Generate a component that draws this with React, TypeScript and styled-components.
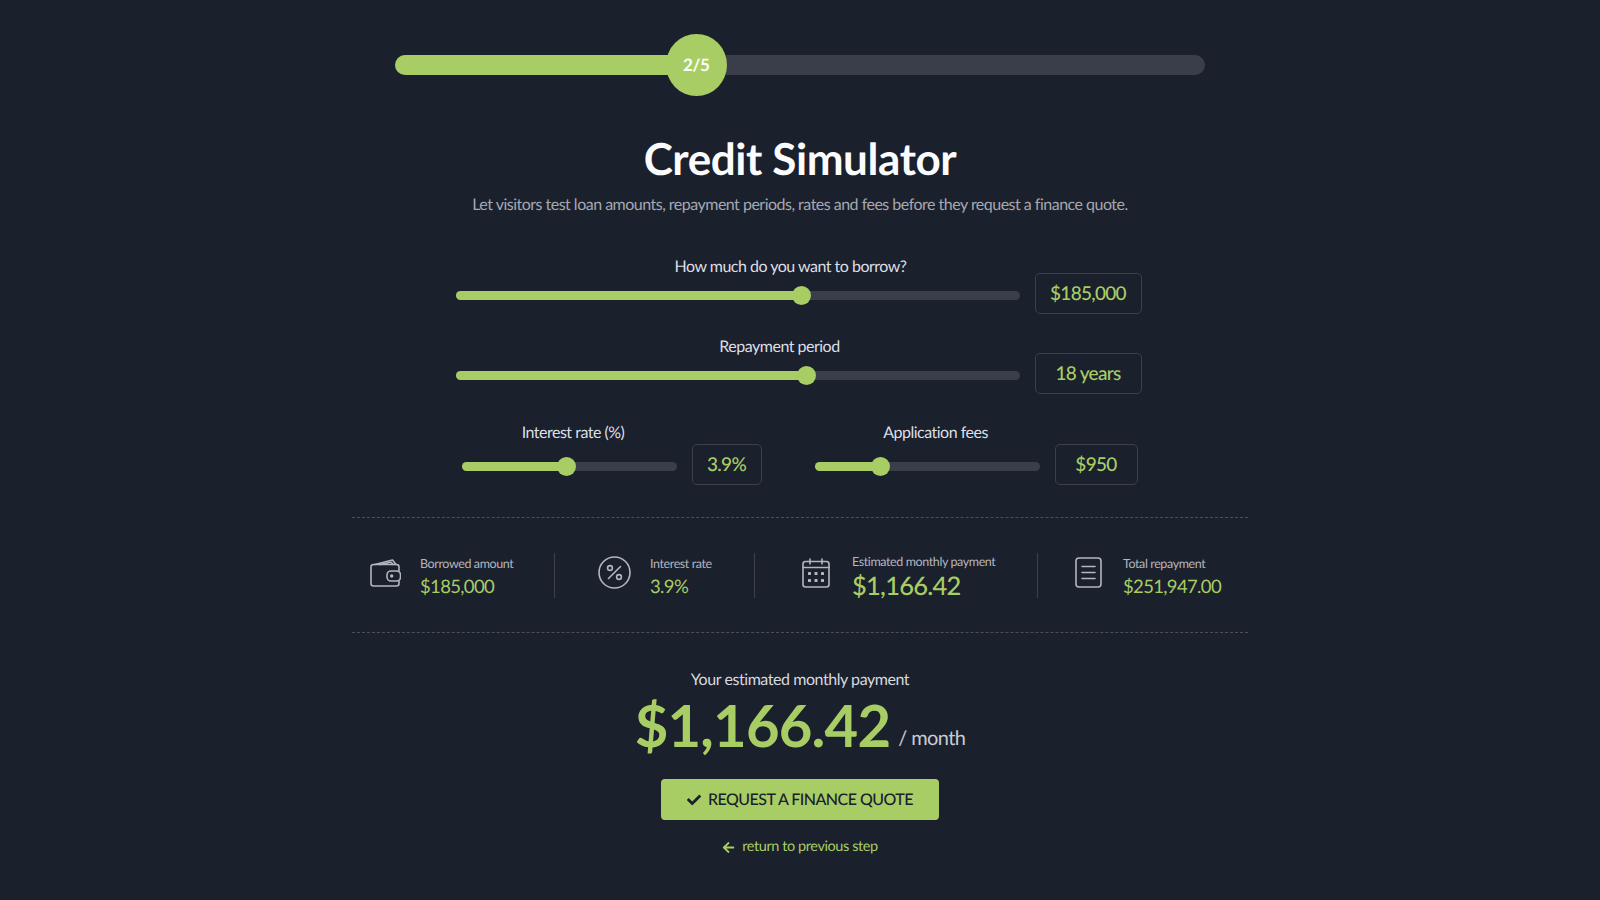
import React from "react";
import styled, { createGlobalStyle } from "styled-components";
import { FaCheck, FaArrowLeft } from "react-icons/fa";

const GREEN = "#a8cd65";
const GlobalStyle = createGlobalStyle`
  html, body { margin: 0; padding: 0; background: #1b202d; }
  body { font-family: Lato, "Liberation Sans", sans-serif; color: #d5d8de; text-rendering: geometricPrecision; }
`;

const Page = styled.main`
  width: 1600px; height: 900px; overflow: hidden; background: #1b202d;
  display: flex; flex-direction: column; align-items: center; padding-top: 34px; box-sizing: border-box;
`;
const Progress = styled.div`
  width: 810px; height: 62px; display: flex; align-items: center; position: relative;
`;
const ProgressTrack = styled.div`
  width: 100%; height: 20px; border-radius: 10px; background: #393e4a; overflow: hidden;
`;
const ProgressFill = styled.div`
  height: 100%; background: ${GREEN};
`;
const Badge = styled.div`
  position: absolute; top: 0; width: 61px; height: 62px; margin-left: -30.5px; border-radius: 50%;
  background: ${GREEN}; color: #fbfdf6; font-size: 17px; font-weight: 700; padding-bottom: 2px; box-sizing: border-box; letter-spacing: -0.3px;
  display: flex; align-items: center; justify-content: center;
`;
const Title = styled.h1`
  margin: 38px 0 0; font-size: 44px; line-height: 50px; padding-bottom: 1px; font-weight: 700; color: #fbfcfd; letter-spacing: -0.42px;
`;
const Subtitle = styled.p`
  margin: 9px 0 0; font-size: 16px; line-height: 22px; color: #a4a8b1; letter-spacing: -0.51px;
`;
const Sliders = styled.section`
  width: 686px; margin-top: 40px; margin-left: -3px; display: flex; flex-direction: column; gap: 22px;
`;
const Row = styled.div`
  display: grid; grid-template-columns: 1fr 107px; grid-template-rows: 22px 36px; column-gap: 15px;
`;
const DualRow = styled.div`
  display: flex; justify-content: space-between; padding: 0 4px 0 6px; margin-top: 6px;
`;
const Group = styled.div<{ $width: number; $box: number }>`
  width: ${p => p.$width}px;
  display: grid; grid-template-columns: 1fr ${p => p.$box}px; grid-template-rows: 22px 46px; column-gap: 15px;
`;
const Label = styled.label<{ $shift: number }>`
  grid-column: 1; font-size: 16px; line-height: 22px; text-align: center; color: #dcdfe4; letter-spacing: -0.5px;
  padding-left: ${p => p.$shift}px; white-space: nowrap;
`;
const Track = styled.div`
  grid-column: 1; grid-row: 2; align-self: center; height: 9px; margin-bottom: 2px; border-radius: 5px; background: #393e4a; position: relative;
`;
const Fill = styled.div`
  height: 100%; border-radius: 5px; background: ${GREEN};
`;
const Thumb = styled.div`
  position: absolute; top: 50%; width: 19px; height: 19px; margin: -9.5px 0 0 -9.5px; border-radius: 50%; background: ${GREEN};
`;
const ValueBox = styled.output<{ $tall?: boolean }>`
  grid-column: 2; grid-row: ${p => (p.$tall ? "1 / 3" : "2")}; align-self: ${p => (p.$tall ? "end" : "start")};
  height: 41px; box-sizing: border-box; border: 1px solid #3b404c; border-radius: 5px;
  display: flex; align-items: center; justify-content: center;
  font-size: 19px; font-weight: 500; color: ${GREEN}; letter-spacing: -0.7px;
`;
const Stats = styled.section`
  width: 896px; height: 116px; margin-top: 27px; box-sizing: border-box;
  border-top: 1px dashed #4a4f5a; border-bottom: 1px dashed #4a4f5a;
  display: flex; align-items: center;
`;
const Stat = styled.div<{ $width: number; $pad: number; $gap: number; $last?: boolean }>`
  width: ${p => p.$width}px; height: 45px; box-sizing: border-box; padding-left: ${p => p.$pad}px;
  display: flex; align-items: center; gap: ${p => p.$gap}px;
  border-right: ${p => (p.$last ? "none" : "1px solid #3c414d")};
  svg { flex: none; color: #b3b6bd; margin-bottom: 5px; }
`;
const StatText = styled.div`
  display: flex; flex-direction: column; margin-top: 3px;
`;
const StatLabel = styled.span`
  font-size: 12.5px; line-height: 18px; color: #b3b6bd; white-space: nowrap; letter-spacing: -0.4px;
`;
const StatValue = styled.span<{ $big?: boolean }>`
  font-size: ${p => (p.$big ? 25.5 : 18.5)}px; line-height: ${p => (p.$big ? 30 : 26)}px; font-weight: ${p => (p.$big ? 500 : 400)};
  letter-spacing: ${p => (p.$big ? -0.75 : -0.65)}px;
  color: ${GREEN}; white-space: nowrap;
`;
const ResultLabel = styled.div`
  margin-top: 36px; font-size: 16px; line-height: 22px; color: #d6d9df; letter-spacing: -0.44px;
`;
const Price = styled.div`
  margin-top: 1px; height: 68px; display: flex; align-items: flex-end; gap: 8px;
`;
const Amount = styled.span`
  font-size: 58px; line-height: 68px; font-weight: 700; color: ${GREEN}; letter-spacing: -0.8px;
`;
const Per = styled.span`
  font-size: 20px; line-height: 24px; margin-bottom: 10px; color: #c9ccd3; letter-spacing: -0.6px;
`;
const Button = styled.button`
  margin-top: 19px; width: 278px; height: 41px; border: none; border-radius: 4px; background: ${GREEN};
  color: #1b202d; font-family: inherit; font-size: 16px; font-weight: 500; text-rendering: geometricPrecision; letter-spacing: -0.53px;
  display: flex; align-items: center; justify-content: center; gap: 7px;
`;
const BackLink = styled.a`
  margin-top: 17px; font-size: 14.5px; line-height: 20px; color: ${GREEN}; letter-spacing: -0.42px;
  display: flex; align-items: center; gap: 7px;
`;

const Slider = ({ pct }: { pct: number }) => (
  <Track>
    <Fill style={{ width: `${pct}%` }} />
    <Thumb style={{ left: `${pct}%` }} />
  </Track>
);

const Wallet = () => (
  <svg width="31" height="28" viewBox="0 0 31 28" fill="none" stroke="currentColor" strokeWidth="1.6" strokeLinejoin="round" strokeLinecap="round">
    <path d="M5 5.5 22.5 1 26 5.5" />
    <path d="M10 5.5 21 3.2 23 5.5" />
    <path d="M3.5 5.5H26.5A2.5 2.5 0 0 1 29 8v4M29 22v2.5a2.5 2.5 0 0 1-2.5 2.5H3.5A2.5 2.5 0 0 1 1 24.5V8a2.5 2.5 0 0 1 2.5-2.5" />
    <rect x="17" y="12" width="13.5" height="10" rx="4" />
    <circle cx="21.7" cy="17" r="0.9" />
  </svg>
);
const Percent = () => (
  <svg width="33" height="33" viewBox="0 0 33 33" fill="none" stroke="currentColor" strokeWidth="1.6" strokeLinecap="round">
    <circle cx="16.5" cy="16.5" r="15.5" />
    <circle cx="12" cy="12" r="2.4" />
    <circle cx="21" cy="21" r="2.4" />
    <path d="M22.5 10.5 10.5 22.5" />
  </svg>
);
const Calendar = () => (
  <svg width="28" height="30" viewBox="0 0 28 30" fill="none" stroke="currentColor" strokeWidth="1.6" strokeLinecap="round">
    <rect x="1" y="3.5" width="26" height="25.5" rx="2.5" />
    <path d="M1 9.5H27M8 1v5M20 1v5" />
    <g fill="currentColor" stroke="none">
      <rect x="6" y="14" width="3" height="3" rx=".6" /><rect x="12.5" y="14" width="3" height="3" rx=".6" /><rect x="19" y="14" width="3" height="3" rx=".6" />
      <rect x="6" y="21" width="3" height="3" rx=".6" /><rect x="12.5" y="21" width="3" height="3" rx=".6" /><rect x="19" y="21" width="3" height="3" rx=".6" />
    </g>
  </svg>
);
const Doc = () => (
  <svg width="27" height="31" viewBox="0 0 27 31" fill="none" stroke="currentColor" strokeWidth="1.6" strokeLinecap="round">
    <rect x="1" y="1" width="25" height="29" rx="3" />
    <path d="M7 9.5H20M7 15.5H20M7 21.5H20" />
  </svg>
);

export default function App() {
  return (
    <Page>
      <GlobalStyle />
      <Progress>
        <ProgressTrack><ProgressFill style={{ width: "37%" }} /></ProgressTrack>
        <Badge style={{ left: "37.2%" }}>2/5</Badge>
      </Progress>
      <Title>Credit Simulator</Title>
      <Subtitle>Let visitors test loan amounts, repayment periods, rates and fees before they request a finance quote.</Subtitle>
      <Sliders>
        <Row>
          <Label $shift={106}>How much do you want to borrow?</Label>
          <Slider pct={61.3} />
          <ValueBox $tall>$185,000</ValueBox>
        </Row>
        <Row>
          <Label $shift={84}>Repayment period</Label>
          <Slider pct={62.3} />
          <ValueBox $tall>18 years</ValueBox>
        </Row>
        <DualRow>
          <Group $width={300} $box={70}>
            <Label $shift={8}>Interest rate (%)</Label>
            <Slider pct={49} />
            <ValueBox>3.9%</ValueBox>
          </Group>
          <Group $width={323} $box={83}>
            <Label $shift={17}>Application fees</Label>
            <Slider pct={29.5} />
            <ValueBox>$950</ValueBox>
          </Group>
        </DualRow>
      </Sliders>
      <Stats>
        <Stat $width={203} $pad={18} $gap={19}>
          <Wallet />
          <StatText><StatLabel>Borrowed amount</StatLabel><StatValue>$185,000</StatValue></StatText>
        </Stat>
        <Stat $width={200} $pad={43} $gap={19}>
          <Percent />
          <StatText><StatLabel>Interest rate</StatLabel><StatValue>3.9%</StatValue></StatText>
        </Stat>
        <Stat $width={283} $pad={47} $gap={22}>
          <Calendar />
          <StatText><StatLabel>Estimated monthly payment</StatLabel><StatValue $big>$1,166.42</StatValue></StatText>
        </Stat>
        <Stat $width={210} $pad={37} $gap={21} $last>
          <Doc />
          <StatText><StatLabel>Total repayment</StatLabel><StatValue>$251,947.00</StatValue></StatText>
        </Stat>
      </Stats>
      <ResultLabel>Your estimated monthly payment</ResultLabel>
      <Price>
        <Amount>$1,166.42</Amount>
        <Per>/ month</Per>
      </Price>
      <Button><FaCheck size={14} />REQUEST A FINANCE QUOTE</Button>
      <BackLink><FaArrowLeft size={13} />return to previous step</BackLink>
    </Page>
  );
}
